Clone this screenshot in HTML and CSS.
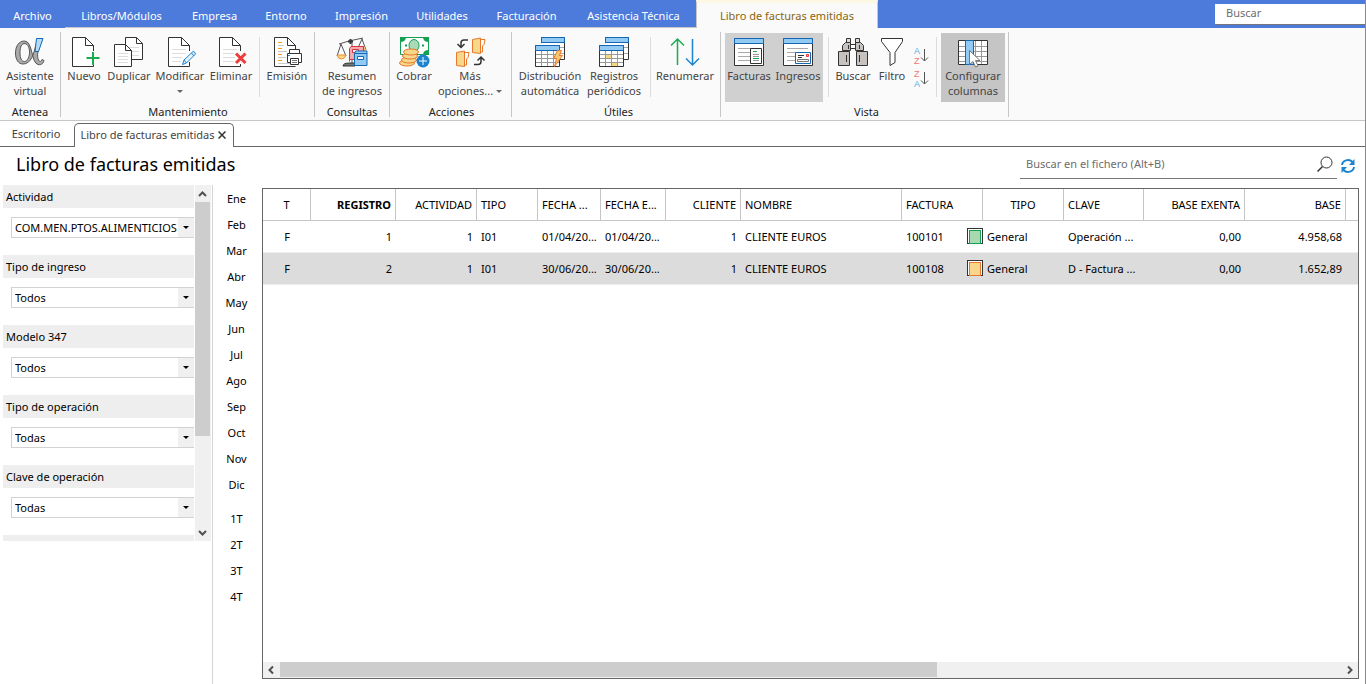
FILE: index.html
```html
<!DOCTYPE html>
<html lang="es">
<head>
<meta charset="utf-8">
<title>Libro de facturas emitidas</title>
<link rel="stylesheet" href="styles.css">
</head>
<body>
<svg class="defs" aria-hidden="true">
  <symbol id="grid-sheet" viewBox="0 0 32 32">
    <path d="M7.500 7V1.500H30.500V23.500H26" fill="#fff" stroke="#333"/>
    <path d="M26 11.500h4M26 17.500h4" stroke="#aaa"/>
    <path d="M7.500 1.500h23v5h-23z" fill="#92caf4" stroke="#1467b3"/>
    <path d="M1.500 9.500h24v21h-24z" fill="#fff" stroke="#333"/>
    <path d="M2 18.500h23M2 22.500h23M2 26.500h23M7.500 15v15M13.500 15v15M19.500 15v15" stroke="#999"/>
    <path d="M1.500 9.500h24v5h-24z" fill="#92caf4" stroke="#1467b3"/>
  </symbol>
  <symbol id="window" viewBox="0 0 32 32">
    <path d="M1.500 2.500h29v27h-29z" fill="#fff" stroke="#333"/>
    <path d="M5 12.500h21M5 16.500h21M5 20.500h13M5 24.500h13" stroke="#aaa"/>
    <path d="M1.500 2.500h29v5h-29z" fill="#92caf4" stroke="#1467b3"/>
  </symbol>
  <symbol id="cup" viewBox="0 0 16 17">
    <path d="M9.500 2.500h4.500l-1 5 -1.500 1.500v6H9.500" fill="#fff" stroke="#e9782a"/>
    <path d="M1.500 2.500l8-1.500v15.500l-8-1z" fill="#f7d78c" stroke="#e9782a"/>
  </symbol>
</svg>

<div class="app">
<nav class="menu" aria-label="Menú principal">
  <button class="menu-item menu-file">Archivo</button>
  <button class="menu-item">Libros/Módulos</button>
  <button class="menu-item">Empresa</button>
  <button class="menu-item">Entorno</button>
  <button class="menu-item">Impresión</button>
  <button class="menu-item">Utilidades</button>
  <button class="menu-item">Facturación</button>
  <button class="menu-item">Asistencia Técnica</button>
  <button class="menu-item menu-active">Libro de facturas emitidas</button>
  <input class="menu-search" type="text" placeholder="Buscar" aria-label="Buscar">
</nav>

<div class="ribbon">
  <section class="group g-atenea">
    <div class="tools">
      <button class="tool w60"><svg class="icon" viewBox="0 0 32 32"><path d="M22 8C20 18 17 28 9 28C4 28 1.500 23 1.500 17C1.500 10 5 5 10.500 5C19 5 17 27 24 28.500C27.500 29.500 29.500 27 30 24.500L28 23.500C27 26 25.500 26 24.500 24C22.500 20 24 14 26 8z" fill="#aaa" stroke="#555"/><path d="M10 7.500C6.500 8.500 6 13 6 17C6 22 7.500 25.500 10.500 25.500C13.500 25.500 16 20 15.500 15C15 10 13 7.500 10 7.500z" fill="#fafafa" stroke="#555"/><path d="M22.500 2.500h6.500l-4.500 13h-3.500z" fill="#b5dcf7" stroke="#1467b3"/></svg><span>Asistente<br>virtual</span></button>
    </div>
    <h2 class="group-name">Atenea</h2>
  </section>

  <section class="group g-mant">
    <div class="tools">
      <button class="tool w44"><svg class="icon" viewBox="0 0 32 32"><path d="M25.500 15V9.500L17.500 1.500H4.500V30.500H25.500V28" fill="#fff" stroke="#333"/><path d="M17.500 1.500v8h8" fill="none" stroke="#333"/><path d="M25 16v13M18.500 22h13" stroke="#19ad50" stroke-width="2"/></svg><span>Nuevo</span></button>
      <button class="tool w46"><svg class="icon" viewBox="0 0 32 32"><path d="M12.500 1.500H23.500L29.500 7.500V23.500H12.500z" fill="#fff" stroke="#333"/><path d="M23.500 1.500v6h6" fill="none" stroke="#333"/><path d="M16 11.500h10M16 15.500h10M16 19.500h10" stroke="#ddd"/><path d="M1.500 8.500H12.500L18.500 14.500V30.500H1.500z" fill="#fff" stroke="#333"/><path d="M12.500 8.500v6h6" fill="none" stroke="#333"/><path d="M5 17.500h10M5 20.500h10M5 23.500h10M5 26.500h10" stroke="#ddd"/></svg><span>Duplicar</span></button>
      <button class="tool w56"><svg class="icon" viewBox="0 0 32 32"><path d="M25.500 15V9.500L17.500 1.500H4.500V30.500H25.500V26" fill="#fff" stroke="#333"/><path d="M17.500 1.500v8h8" fill="none" stroke="#333"/><path d="M8 13.500h14M8 17.500h14M8 21.500h10M8 25.500h9" stroke="#ddd"/><path d="M18.500 28.500l1.500-4.500 9-8.500q2 0 2.500 2.500l-9 9zM20 24l2.500 3M27.500 17l2.500 3" fill="#e5f3fc" stroke="#1c84cf"/></svg><span>Modificar</span><i class="caret"></i></button>
      <button class="tool w46"><svg class="icon" viewBox="0 0 32 32"><path d="M25.500 15V9.500L17.500 1.500H4.500V30.500H25.500V28" fill="#fff" stroke="#333"/><path d="M17.500 1.500v8h8" fill="none" stroke="#333"/><path d="M8 13.500h14M8 17.500h11M8 21.500h12M8 25.500h11" stroke="#ddd"/><path d="M21 17.500l9.500 9.500M30.500 17.500L21 27" stroke="#ee3b3b" stroke-width="3"/></svg><span>Eliminar</span></button>
      <i class="split"></i>
      <button class="tool w46"><svg class="icon" viewBox="0 0 32 32"><path d="M24.500 13V9.500L16.500 1.500H3.500V30.500H24.500" fill="#fff" stroke="#333"/><path d="M16.500 1.500v8h8" fill="none" stroke="#333"/><path d="M7 6.500h4M7 12.500h4M7 18.500h4M7 24.500h4" stroke="#f29a1e"/><path d="M7 9.500h6M7 15.500h9M7 21.500h8M7 27.500h12" stroke="#ccc"/><path d="M18.500 18v-4.500h10V18M16.500 17.500h14v9h-14z" fill="#fff" stroke="#333"/><path d="M19.500 22.500h8v6h-8z" fill="#fff" stroke="#333"/><path d="M21 24.500h5M21 26.500h5" stroke="#777"/><path d="M17 19.500h2" stroke="#1c84cf"/></svg><span>Emisión</span></button>
    </div>
    <h2 class="group-name">Mantenimiento</h2>
  </section>

  <section class="group g-cons">
    <div class="tools">
      <button class="tool"><svg class="icon" viewBox="0 0 32 32"><path d="M16 5v22M3 8l10-3 14-3M5 8L1 20M5 8l5 12M26 3l-5 11M26 3l4 11" fill="none" stroke="#555"/><path d="M1 19h9q-1 4-4.500 4T1 19z" fill="#f7d78c" stroke="#e9902a"/><path d="M7 30q0-3 7-3h5v3z" fill="#777" stroke="#333"/><path d="M14.500 3v5M12 5.500h5" stroke="#333" stroke-width="2"/><path d="M24 10h4l3 6h-5z" fill="#f7c06c"/><path d="M13.500 25.500V12.500l1.500-2h12.500v13H14" fill="#f4a9ae" stroke="#d7333d"/><path d="M16.500 13.500h6v3h-6z" fill="#fff" stroke="#d7333d"/><path d="M18.500 29.500V17.500l1-2.500h11.500v14.500z" fill="#92caf4" stroke="#1467b3"/><path d="M18.500 17.500h12.500" stroke="#1467b3"/><path d="M21.500 20.500h6v3h-6z" fill="#fff" stroke="#1467b3"/></svg><span>Resumen<br>de ingresos</span></button>
    </div>
    <h2 class="group-name">Consultas</h2>
  </section>

  <section class="group g-acc">
    <div class="tools">
      <button class="tool w44"><svg class="icon" viewBox="0 0 32 32"><path d="M2.500 1.500h28v17h-28z" fill="#fff" stroke="#12a150"/><path d="M2 1h6q0 5-6 5zM31 1h-6q0 5 6 5zM31 19h-6q0-5 6-5z" fill="#12a150"/><ellipse cx="16" cy="9.500" rx="5" ry="6" fill="#a9d9b8" stroke="#12a150"/><path d="M7 9.500h2M24 9.500h2" stroke="#12a150" stroke-width="2"/><g fill="#f7d78c" stroke="#e9782a"><ellipse cx="9" cy="27" rx="7.500" ry="3"/><ellipse cx="11" cy="24" rx="7.500" ry="3"/><ellipse cx="12" cy="20" rx="7.500" ry="3"/><ellipse cx="13" cy="16" rx="7.500" ry="3"/></g><circle cx="25" cy="25" r="6.500" fill="#1c84cf"/><path d="M25 21v8M21 25h8" stroke="#fff"/></svg><span>Cobrar</span></button>
      <button class="tool w68"><svg class="icon" viewBox="0 0 32 32"><use href="#cup" x="17" y="1" width="16" height="17"/><use href="#cup" x="1" y="14" width="16" height="17"/><path d="M14 4h-4q-3 0-3 3v4M3.500 8L7 11.500 10.500 8M20 28.500h4q3 0 3-3v-4M23.500 24.500L27 21l3.500 3.500" fill="none" stroke="#333" stroke-width="1.500"/></svg><span>Más<br>opciones... <i class="caret caret-inline"></i></span></button>
    </div>
    <h2 class="group-name">Acciones</h2>
  </section>

  <section class="group g-util">
    <div class="tools">
      <button class="tool w66"><svg class="icon" viewBox="0 0 32 32"><use href="#grid-sheet"/><path d="M23.500 14.500h4l-2 5h3l-8 11 2-8h-3z" fill="#f9c66d" stroke="#e9782a"/></svg><span>Distribución<br>automática</span></button>
      <button class="tool w62"><svg class="icon" viewBox="0 0 32 32"><use href="#grid-sheet"/><path d="M8 19h5v3H8zM14 27h5v3h-5z" fill="#f9d77c"/></svg><span>Registros<br>periódicos</span></button>
      <i class="split"></i>
      <button class="tool w60"><svg class="icon" viewBox="0 0 32 32"><path d="M8.500 29V3M2 9.500L8.500 3 15 9.500" fill="none" stroke="#19ad50" stroke-width="1.500"/><path d="M23.500 3v26M17 22.500l6.500 6.500 6.500-6.500" fill="none" stroke="#1c84cf" stroke-width="1.500"/></svg><span>Renumerar</span></button>
    </div>
    <h2 class="group-name">Útiles</h2>
  </section>

  <section class="group g-vista">
    <div class="tools">
      <button class="tool pressed w48"><svg class="icon" viewBox="0 0 32 32"><use href="#window"/><path d="M17.500 12.500h11v15h-11z" fill="#fff" stroke="#333"/><path d="M20 15.500h4M20 22.500h6" stroke="#19ad50"/><path d="M20 18.500h6M20 20.500h6M20 24.500h6" stroke="#999"/></svg><span>Facturas</span></button>
      <button class="tool pressed w50"><svg class="icon" viewBox="0 0 32 32"><use href="#window"/><path d="M13.500 16.500h15v11h-15z" fill="#fff" stroke="#1467b3"/><path d="M16 19.500h6M16 21.500h4" stroke="#333"/><path d="M24.500 18.500h2v2h-2z" fill="#fbb" stroke="#e33"/><path d="M15.500 23.500h11v2h-11z" fill="#fff" stroke="#777"/></svg><span>Ingresos</span></button>
      <i class="split"></i>
      <button class="tool w40"><svg class="icon" viewBox="0 0 32 32"><path d="M9.500 2.500h4v4h-4zM18.500 2.500h4v4h-4z" fill="#ddd" stroke="#333"/><path d="M13 8.500h6v4h-6z" fill="#fff" stroke="#333"/><path d="M5.500 14.500V9.500l3-3h5v8zM26.500 14.500V9.500l-3-3h-5v8z" fill="#c5c2c0" stroke="#333"/><path d="M1.500 29.500V15.500h11v14zM19.500 29.500V15.500h11v14z" fill="#c5c2c0" stroke="#333"/><path d="M11.500 9v4M22.500 9v4M9.500 19v7M22.500 19v7" stroke="#333"/></svg><span>Buscar</span></button>
      <button class="tool w38"><svg class="icon" viewBox="0 0 32 32"><path d="M5.500 2.500h21v3l-7.500 11v10l-5 3v-13l-8.500-11z" fill="#fff" stroke="#333"/></svg><span>Filtro</span></button>
      <div class="sorts">
        <button class="sort" aria-label="Orden ascendente"><svg viewBox="0 0 16 18" width="16" height="18"><text class="sort-letter" x="1" y="7" fill="#58a8e0">A</text><text class="sort-letter" x="1" y="17" fill="#f07474">Z</text><path d="M11.500 2v12M8 10.500l3.500 3.500 3.500-3.500" fill="none" stroke="#555"/></svg></button>
        <button class="sort" aria-label="Orden descendente"><svg viewBox="0 0 16 18" width="16" height="18"><text class="sort-letter" x="1" y="7" fill="#f07474">Z</text><text class="sort-letter" x="1" y="17" fill="#58a8e0">A</text><path d="M11.500 2v12M8 10.500l3.500 3.500 3.500-3.500" fill="none" stroke="#555"/></svg></button>
      </div>
      <i class="split"></i>
      <button class="tool selected w64"><svg class="icon" viewBox="0 0 32 32"><path d="M1.500 4.500h29v24h-29z" fill="#fff" stroke="#333"/><path d="M2 10.500h28M2 15.500h28M2 20.500h28M2 25.500h28M18.500 5v23M24.500 5v23" stroke="#999"/><path d="M8.500 4.500h8v24h-8z" fill="#92caf4" stroke="#1467b3"/><path d="M12.500 14.500v14l3.500-3 2.500 5.500 2.500-1-2.500-5.500h4.500z" fill="#fff" stroke="#777"/></svg><span>Configurar<br>columnas</span></button>
    </div>
    <h2 class="group-name">Vista</h2>
  </section>
</div>

<div class="tabs">
  <button class="tab">Escritorio</button>
  <button class="tab tab-active">Libro de facturas emitidas<svg class="close" viewBox="0 0 8 8" width="8" height="8"><path d="M.5.500l7 7M7.500.500l-7 7" stroke="#333" stroke-width="1.500"/></svg></button>
</div>

<header class="heading">
  <h1>Libro de facturas emitidas</h1>
  <div class="find">
    <input type="text" placeholder="Buscar en el fichero (Alt+B)" aria-label="Buscar en el fichero">
    <button class="plain" aria-label="Buscar"><svg viewBox="0 0 16 16" width="16" height="16"><circle cx="9.500" cy="6.500" r="5.500" fill="none" stroke="#333"/><path d="M5.500 10.500L.5 15.500" stroke="#333" stroke-width="1.500"/></svg></button>
  </div>
  <button class="plain" aria-label="Actualizar"><svg viewBox="0 0 16 16" width="16" height="16"><path d="M2 7a6 5.500 0 0 1 10.500-3M14 9a6 5.500 0 0 1-10.500 3" fill="none" stroke="#1c84cf" stroke-width="2"/><path d="M14.500 1v6H9zM1.500 15V9H7z" fill="#1c84cf"/></svg></button>
</header>

<main class="work">
  <aside class="side">
    <div class="filters">
      <label class="filter-name" for="f1">Actividad</label>
      <div class="filter"><select id="f1"><option>COM.MEN.PTOS.ALIMENTICIOS</option></select><i class="drop"></i></div>
      <label class="filter-name" for="f2">Tipo de ingreso</label>
      <div class="filter"><select id="f2"><option>Todos</option></select><i class="drop"></i></div>
      <label class="filter-name" for="f3">Modelo 347</label>
      <div class="filter"><select id="f3"><option>Todos</option></select><i class="drop"></i></div>
      <label class="filter-name" for="f4">Tipo de operación</label>
      <div class="filter"><select id="f4"><option>Todas</option></select><i class="drop"></i></div>
      <label class="filter-name" for="f5">Clave de operación</label>
      <div class="filter"><select id="f5"><option>Todas</option></select><i class="drop"></i></div>
      <div class="filter-name"></div>
    </div>
    <div class="vbar">
      <svg viewBox="0 0 16 17" width="16" height="17"><path d="M4 11l3.500-3.500L11 11" fill="none" stroke="#505050" stroke-width="2"/></svg>
      <div class="vthumb"></div>
      <svg class="vend" viewBox="0 0 16 17" width="16" height="17"><path d="M4 7l3.500 3.500L11 7" fill="none" stroke="#505050" stroke-width="2"/></svg>
    </div>
  </aside>

  <nav class="months" aria-label="Periodo">
    <button>Ene</button><button>Feb</button><button>Mar</button><button>Abr</button><button>May</button><button>Jun</button><button>Jul</button><button>Ago</button><button>Sep</button><button>Oct</button><button>Nov</button><button>Dic</button>
    <button class="quarter">1T</button><button>2T</button><button>3T</button><button>4T</button>
  </nav>

  <section class="grid">
    <table>
      <colgroup><col class="c48"><col class="c85"><col class="c81"><col class="c61"><col class="c63"><col class="c65"><col class="c75"><col class="c161"><col class="c81"><col class="c81"><col class="c80"><col class="c101"><col class="c101"><col></colgroup>
      <thead>
        <tr><th class="mid">T</th><th class="num sorted">REGISTRO</th><th class="num">ACTIVIDAD</th><th>TIPO</th><th>FECHA ...</th><th>FECHA E...</th><th class="num">CLIENTE</th><th>NOMBRE</th><th>FACTURA</th><th class="mid">TIPO</th><th>CLAVE</th><th class="num">BASE EXENTA</th><th class="num">BASE</th><th></th></tr>
      </thead>
      <tbody>
        <tr><td class="mid">F</td><td class="num">1</td><td class="num">1</td><td>I01</td><td>01/04/20...</td><td>01/04/20...</td><td class="num">1</td><td>CLIENTE EUROS</td><td>100101</td><td class="kind"><i class="swatch green"></i>General</td><td>Operación ...</td><td class="num">0,00</td><td class="num">4.958,68</td><td></td></tr>
        <tr class="current"><td class="mid">F</td><td class="num">2</td><td class="num">1</td><td>I01</td><td>30/06/20...</td><td>30/06/20...</td><td class="num">1</td><td>CLIENTE EUROS</td><td>100108</td><td class="kind"><i class="swatch orange"></i>General</td><td>D - Factura ...</td><td class="num">0,00</td><td class="num">1.652,89</td><td></td></tr>
      </tbody>
    </table>
    <div class="hbar">
      <svg viewBox="0 0 17 16" width="17" height="16"><path d="M10 4.500L6.500 8l3.500 3.500" fill="none" stroke="#505050" stroke-width="2"/></svg>
      <div class="hthumb"></div>
      <svg class="hend" viewBox="0 0 17 16" width="17" height="16"><path d="M7 4.500L10.500 8 7 11.500" fill="none" stroke="#505050" stroke-width="2"/></svg>
    </div>
  </section>
</main>
</div>
</body>
</html>
```
FILE: styles.css
```css
* { box-sizing: border-box; }
body {
  margin: 0;
  font: 11px/15px "Noto Sans", "Open Sans", sans-serif;
  color: #000;
  background: #fff;
}
button, input, select { font: inherit; color: inherit; border: 0; padding: 0; margin: 0; background: none; border-radius: 0; }
h1, h2 { margin: 0; font-weight: 400; }
.defs { display: none; }
.app { display: flex; flex-direction: column; height: 100vh; border-right: 1px solid #8a8a8a; overflow: hidden; }

.menu {
  display: grid;
  grid-template-columns: 65px 113px 73px 70px 81px 80px 89px 125px 182px minmax(150px, 1fr);
  height: 28px;
  flex: none;
  background: #4d7bdb;
}
.menu-item { color: #fff; padding-top: 3px; white-space: nowrap; border-bottom: 1px solid #c6c6c6; }
.menu-file { border-bottom-color: #4d7bdb; }
.menu-active { background: #fafafa; color: #8a6410; border: 1px solid #c6c6c6; border-top: 3px solid #fdf8e4; border-bottom: 0; padding: 0; }
.menu-search { justify-self: end; align-self: center; width: 150px; height: 21px; margin-top: 1px; padding: 0 11px 3px; background: #fff; border-bottom: 1px solid #777; }
.menu-search::placeholder, .find input::placeholder { color: #6d6d6d; opacity: 1; }

.ribbon { display: flex; flex: none; height: 93px; background: #fafafa; border-bottom: 1px solid #c6c6c6; padding-top: 4px; }
.group { display: flex; flex-direction: column; height: 85px; border-right: 1px solid #c6c6c6; padding-top: 1px; }
.g-atenea { width: 61px; }
.g-mant { width: 254px; padding-left: 1px; }
.g-cons { width: 75px; }
.g-acc { width: 122px; padding-left: 2px; }
.g-util { width: 209px; padding-left: 5px; }
.g-vista { width: 288px; padding-left: 4px; }
.tools { display: flex; flex: none; height: 69px; }
.tool { display: flex; flex-direction: column; align-items: center; padding-top: 3px; color: #444; white-space: nowrap; text-align: center; }
.g-cons .tool { width: 74px; }
.icon { width: 32px; height: 32px; flex: none; overflow: visible; }
.w38 { width: 38px; }
.w40 { width: 40px; }
.w44 { width: 44px; }
.w46 { width: 46px; }
.w48 { width: 48px; }
.w50 { width: 50px; }
.w56 { width: 56px; }
.w60 { width: 60px; }
.w62 { width: 62px; }
.w64 { width: 64px; }
.w66 { width: 66px; }
.w68 { width: 68px; }
.pressed { background: #d0d0d0; }
.selected { background: #c5c5c5; }
.split { width: 1px; height: 60px; margin: 4px 4px 0 5px; background: #ddd; }
.caret { width: 0; height: 0; margin-top: 7px; border: 3px solid transparent; border-top-color: #666; border-bottom: 0; }
.caret-inline { display: inline-block; margin: 0 0 2px; }
.sorts { display: flex; flex-direction: column; align-items: center; width: 20px; padding-top: 14px; gap: 5px; }
.sort { height: 18px; }
.sort-letter { font: 9px "Liberation Sans", sans-serif; }
.group-name { flex: none; font-size: 11px; line-height: 15px; margin-top: 2px; text-align: center; color: #222; }

.tabs { display: flex; flex: none; height: 26px; border-bottom: 1px solid #666; padding-top: 2px; }
.tab { width: 74px; color: #444; white-space: nowrap; padding: 0 2px 2px 0; }
.tab-active { width: 160px; height: 24px; background: #fff; border: 1px solid #666; border-bottom: 0; border-radius: 5px 5px 0 0; }
.close { margin-left: 3px; }

.heading { display: flex; flex: none; align-items: flex-start; height: 38px; padding: 0 9px 0 16px; gap: 3px; }
.heading h1 { flex: 1; font-size: 18px; line-height: 34px; }
.find { display: flex; align-items: center; width: 317px; height: 32px; padding: 2px 4px 0 6px; border-bottom: 1px solid #777; }
.find input { flex: 1; min-width: 0; }
.plain { display: flex; align-self: center; }

.work { display: flex; flex: 1; min-height: 0; }
.side { display: flex; width: 213px; padding-left: 3px; border-right: 1px solid #d4d4d4; }
.filters { flex: 1; height: 356px; overflow: hidden; }
.filter-name { display: block; height: 23px; padding: 4px 3px; background: #eee; }
.filter { position: relative; height: 21px; margin: 9px 0 17px 8px; border: 1px solid #d2d2d2; border-right: 0; }
.filter select { display: block; width: 100%; height: 19px; padding-left: 3px; appearance: none; }
.drop { position: absolute; top: 0; right: 0; width: 16px; height: 19px; background: #f0f0f0; pointer-events: none; }
.drop::after { content: ""; display: block; margin: 8px 0 0 5px; width: 0; border: 3px solid transparent; border-top-color: #000; border-bottom: 0; }
.vbar { display: flex; flex-direction: column; width: 16px; height: 356px; margin: 0 1px; background: #f0f0f0; }
.vthumb { width: 15px; height: 234px; background: #cdcdcd; }
.vend { margin-top: auto; }

.months { display: flex; flex-direction: column; width: 49px; padding-right: 2px; }
.months button { height: 26px; }
.months .quarter { margin-top: 8px; }

.grid { display: flex; flex-direction: column; flex: 1; min-width: 0; margin: 3px 6px 5px 0; border: 1px solid #666; }
table { width: 100%; table-layout: fixed; border-collapse: separate; border-spacing: 0; }
th, td { height: 32px; padding: 0 4px; text-align: left; font-weight: 400; white-space: nowrap; }
th { border-right: 1px solid #c6c6c6; border-bottom: 1px solid #c6c6c6; padding-bottom: 1px; }
th:last-child { border-right: 0; }
td { border-bottom: 1px solid #eee; }
.mid { text-align: center; }
.num { text-align: right; }
.sorted { font-weight: 700; }
.current td { background: #dcdcdc; }
.kind { position: relative; }
.swatch { position: absolute; left: -16px; top: 7px; width: 16px; height: 16px; border: 1px solid #333; background: #fff; padding: 1px; }
.swatch::after { content: ""; display: block; height: 12px; border: 1px solid; }
.green::after { background: #a9d9b1; border-color: #12a150; }
.orange::after { background: #f8d78c; border-color: #e9782a; }
.c48 { width: 48px; }
.c61 { width: 61px; }
.c63 { width: 63px; }
.c65 { width: 65px; }
.c75 { width: 75px; }
.c80 { width: 80px; }
.c81 { width: 81px; }
.c85 { width: 85px; }
.c101 { width: 101px; }
.c161 { width: 161px; }
.hbar { display: flex; height: 16px; margin-top: auto; background: #f0f0f0; }
.hthumb { width: 60%; height: 15px; background: #cdcdcd; }
.hend { margin-left: auto; }
```
